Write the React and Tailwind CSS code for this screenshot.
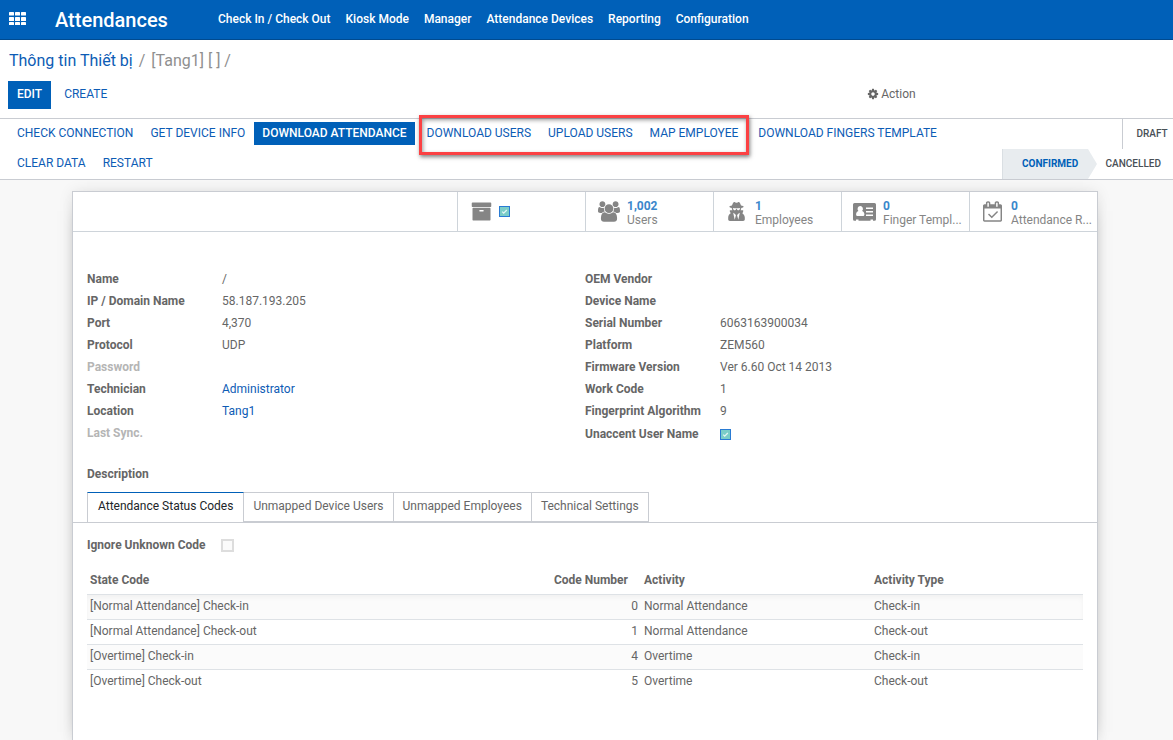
import { FaUserSecret } from "react-icons/fa";

const menuItems = [
  "Check In / Check Out",
  "Kiosk Mode",
  "Manager",
  "Attendance Devices",
  "Reporting",
  "Configuration",
];

const leftFields = [
  { label: "Name", value: "/" },
  { label: "IP / Domain Name", value: "58.187.193.205" },
  { label: "Port", value: "4,370" },
  { label: "Protocol", value: "UDP" },
  { label: "Password", empty: true },
  { label: "Technician", value: "Administrator", link: true },
  { label: "Location", value: "Tang1", link: true },
  { label: "Last Sync.", empty: true },
];

const rightFields = [
  { label: "OEM Vendor" },
  { label: "Device Name" },
  { label: "Serial Number", value: "6063163900034" },
  { label: "Platform", value: "ZEM560" },
  { label: "Firmware Version", value: "Ver 6.60 Oct 14 2013" },
  { label: "Work Code", value: "1" },
  { label: "Fingerprint Algorithm", value: "9" },
];

const tabs = [
  "Attendance Status Codes",
  "Unmapped Device Users",
  "Unmapped Employees",
  "Technical Settings",
];

const codes = [
  { name: "[Normal Attendance] Check-in", code: 0, activity: "Normal Attendance", type: "Check-in" },
  { name: "[Normal Attendance] Check-out", code: 1, activity: "Normal Attendance", type: "Check-out" },
  { name: "[Overtime] Check-in", code: 4, activity: "Overtime", type: "Check-in" },
  { name: "[Overtime] Check-out", code: 5, activity: "Overtime", type: "Check-out" },
];

const GridIcon = () => (
  <svg viewBox="0 0 17 13" className="w-[17px] h-[13px]" fill="currentColor">
    {[0, 6, 12].map((x) =>
      [0, 5, 10].map((y) => <rect key={`${x}-${y}`} x={x} y={y} width="5" height={y === 5 ? 4 : 3.6} rx="0.6" />)
    )}
  </svg>
);

const CogIcon = () => (
  <svg viewBox="0 0 1792 1792" className="size-3" fill="currentColor">
    <path d="M1152 896q0-106-75-181t-181-75-181 75-75 181 75 181 181 75 181-75 75-181zm512-109v222q0 12-8 23t-20 13l-185 28q-19 54-39 91 35 50 107 138 10 12 10 25t-9 23q-27 37-99 108t-94 71q-12 0-26-9l-138-108q-44 23-91 38-16 136-29 186-7 28-36 28h-222q-14 0-24.5-8.5t-11.5-21.5l-28-184q-49-16-90-37l-141 107q-10 9-25 9-14 0-25-11-126-114-165-168-7-10-7-23 0-12 8-23 15-21 51-66.5t54-70.5q-27-50-41-99l-183-27q-13-2-21-12.5t-8-23.5v-222q0-12 8-23t19-13l186-28q14-46 39-92-40-57-107-138-10-12-10-24 0-10 9-23 26-36 98.5-107.5t94.5-71.5q13 0 26 10l138 107q44-23 91-38 16-136 29-186 7-28 36-28h222q14 0 24.5 8.5t11.5 21.5l28 184q49 16 90 37l142-107q9-9 24-9 13 0 25 10 129 119 165 170 7 8 7 22 0 12-8 23-15 21-51 66.5t-54 70.5q26 50 41 98l183 28q13 2 21 12.5t8 23.5z" />
  </svg>
);

const ArchiveIcon = () => (
  <svg viewBox="0 0 1792 1792" className="size-[21px]" fill="currentColor">
    <path d="M1088 832q0-26-19-45t-45-19h-256q-26 0-45 19t-19 45 19 45 45 19h256q26 0 45-19t19-45zm576-192v960q0 26-19 45t-45 19h-1408q-26 0-45-19t-19-45v-960q0-26 19-45t45-19h1408q26 0 45 19t19 45zm64-448v256q0 26-19 45t-45 19h-1536q-26 0-45-19t-19-45v-256q0-26 19-45t45-19h1536q26 0 45 19t19 45z" />
  </svg>
);

const UsersIcon = () => (
  <svg viewBox="0 0 1920 1792" className="w-[22px] h-[21px]" fill="currentColor">
    <path d="M593 896q-162 5-265 128h-134q-82 0-138-40.5t-56-118.5q0-353 124-353 6 0 43.5 21t97.5 42.5 119 21.5q67 0 133-23-5 37-5 66 0 139 81 256zm1071 637q0 120-73 189.5t-194 69.5h-874q-121 0-194-69.5t-73-189.5q0-53 3.5-103.5t14-109 26.5-108.5 43-97.5 62-81 85.5-53.5 111.5-20q10 0 43 21.5t73 48 107 48 135 21.5 135-21.5 107-48 73-48 43-21.5q61 0 111.5 20t85.5 53.5 62 81 43 97.5 26.5 108.5 14 109 3.5 103.5zm-1024-1277q0 106-75 181t-181 75-181-75-75-181 75-181 181-75 181 75 75 181zm704 384q0 159-112.5 271.5t-271.5 112.5-271.5-112.5-112.5-271.5 112.5-271.5 271.5-112.5 271.5 112.5 112.5 271.5zm576 225q0 78-56 118.5t-138 40.5h-134q-103-123-265-128 81-117 81-256 0-29-5-66 66 23 133 23 59 0 119-21.5t97.5-42.5 43.5-21q124 0 124 353zm-128-609q0 106-75 181t-181 75-181-75-75-181 75-181 181-75 181 75 75 181z" />
  </svg>
);

const AddressCardIcon = () => (
  <svg viewBox="0 0 23 18" className="w-[23px] h-[18px]" fill="currentColor">
    <path
      fillRule="evenodd"
      d="M1.5 0h20A1.5 1.5 0 0 1 23 1.5v14.8a1.5 1.5 0 0 1-1.5 1.5H20v-1.2h-2.5v1.2H5.5v-1.2H3v1.2H1.500A1.5 1.5 0 0 1 0 16.300V1.5A1.5 1.5 0 0 1 1.5 0zM7.200 3a2.700 2.900 0 0 0-1.800 5C4 8.300 3.100 9.600 3.100 11.500c0 .9.5 1.5 1.300 1.500h5.700c.8 0 1.300-.6 1.300-1.500 0-1.900-.9-3.200-2.300-3.500A2.700 2.900 0 0 0 7.200 3zM13 4.500V6h7V4.500zM13 8v1.500h7V8zM13 11.500V13h7v-1.500z"
    />
  </svg>
);

const CalendarIcon = () => (
  <svg viewBox="0 0 1664 1792" className="w-[19px] h-[21px]" fill="currentColor">
    <path d="M1303 964l-512 512q-10 9-23 9t-23-9l-288-288q-9-10-9-23t9-22l46-46q9-9 22-9t23 9l220 220 444-444q10-9 23-9t22 9l46 46q9 9 9 22t-9 23zm-1175 700h1408v-1024h-1408v1024zm384-1216v-288q0-14-9-23t-23-9h-64q-14 0-23 9t-9 23v288q0 14 9 23t23 9h64q14 0 23-9t9-23zm768 0v-288q0-14-9-23t-23-9h-64q-14 0-23 9t-9 23v288q0 14 9 23t23 9h64q14 0 23-9t9-23zm384-64v1280q0 52-38 90t-90 38h-1408q-52 0-90-38t-38-90v-1280q0-52 38-90t90-38h128v-96q0-66 47-113t113-47h64q66 0 113 47t47 113v96h384v-96q0-66 47-113t113-47h64q66 0 113 47t47 113v96h128q52 0 90 38t38 90z" />
  </svg>
);

const Checked = ({ id, label }) => (
  <span className="relative block size-[11px]">
    <input
      id={id}
      type="checkbox"
      aria-label={label}
      defaultChecked
      className="block appearance-none size-[11px] border border-[#2a7bd3] bg-[#7bcdc8]"
    />
    <svg viewBox="0 0 11 11" className="absolute inset-0 pointer-events-none" fill="none" stroke="#e4f6f4" strokeWidth="1.3">
      <path d="M3.2 5.6l1.5 1.5L7.8 4" />
    </svg>
  </span>
);

const StatButton = ({ icon, value, label }) => (
  <button className="flex w-32 h-[39px] border-l border-[#ced4da] text-left">
    <span className="flex w-[41px] h-full shrink-0 items-center justify-center pl-1">{icon}</span>
    <span className="pt-[7px] text-[12px] leading-[14px] whitespace-nowrap">
      <span className="block font-bold text-[#3a87cb]">{value}</span>
      <span className="block">{label}</span>
    </span>
  </button>
);

const ActionButton = ({ children, primary }) => (
  <button
    className={
      primary
        ? "h-[23px] px-2 pb-[2px] bg-[#0060b8] text-white font-medium uppercase"
        : "h-[23px] px-2 pb-[2px] text-[#0d5cb5] uppercase"
    }
  >
    {children}
  </button>
);

const Field = ({ label, value, link, empty }) => (
  <div className="flex h-[22px] items-center">
    <dt className={empty ? "w-[135px] shrink-0 font-bold text-[#b5b5b5]" : "w-[135px] shrink-0 font-bold"}>{label}</dt>
    <dd>{link ? <a href="#" className="text-[#0d5cb5]">{value}</a> : value}</dd>
  </div>
);

const App = () => {
  return (
    <div className="flex flex-col min-h-screen bg-[#f8f8f8] text-[12px] leading-[18px] text-[#666666] font-[Roboto,sans-serif]">
      {/* Main menu */}
      <header className="flex h-10 items-center border-b border-[#004a8f] bg-[#0060b8] pl-[9px] text-white">
        <button aria-label="Applications" className="mr-[29px] pb-[2px]">
          <GridIcon />
        </button>
        <a href="#" className="w-[163px] text-[20px] leading-6 font-medium">Attendances</a>
        <nav className="flex gap-[15px] pb-[2px] font-medium">
          {menuItems.map((item) => (
            <a key={item} href="#">{item}</a>
          ))}
        </nav>
      </header>

      {/* Control panel */}
      <div className="border-b border-[#c9ccd2] bg-white px-2 py-[9px]">
        <ol className="flex gap-[6px] pl-px text-[16px] leading-6 text-[#8f8f8f]">
          <li><a href="#" className="text-[#0d5cb5]">Thông tin Thiết bị</a></li>
          <li>/</li>
          <li>[Tang1] [ ] /</li>
        </ol>
        <div className="grid grid-cols-[74%_1fr] pt-2">
          <div className="flex gap-1">
            <button className="h-7 px-[9px] pb-[2px] bg-[#0060b8] text-white font-medium">EDIT</button>
            <button className="h-7 px-[9px] pb-[2px] text-[#0d5cb5]">CREATE</button>
          </div>
          <button className="flex h-7 items-center gap-[2px] pb-[2px] pl-[3px]">
            <CogIcon />
            Action
          </button>
        </div>
      </div>

      {/* Status bar */}
      <div className="flex justify-between border-b border-[#c9ccd2] bg-white pl-[9px]">
        <div className="flex flex-wrap flex-1 gap-x-px gap-y-[7px] pt-[3px] pb-1">
          <ActionButton>Check Connection</ActionButton>
          <ActionButton>Get Device Info</ActionButton>
          <ActionButton primary>Download Attendance</ActionButton>
          <div className="relative flex gap-px px-[3px]">
            <ActionButton>Download Users</ActionButton>
            <ActionButton>Upload Users</ActionButton>
            <ActionButton>Map Employee</ActionButton>
            <span className="absolute -top-[7px] -bottom-[10px] left-[3px] right-0 border-3 border-[#fb4143] shadow-[1px_2px_4px_rgba(0,0,0,0.5),inset_1px_2px_4px_rgba(0,0,0,0.4)] pointer-events-none" />
          </div>
          <ActionButton>Download Fingers Template</ActionButton>
          <ActionButton>Clear Data</ActionButton>
          <ActionButton>Restart</ActionButton>
        </div>
        <div className="flex w-[171px] flex-wrap justify-end text-[10px] font-medium text-[#495057]">
          <button className="h-[30px] w-[51px] border-l border-[#c9ccd2] pl-2 pb-px">DRAFT</button>
          <div className="flex">
            <button className="relative h-[30px] w-[86px] border-l border-[#dadfe3] bg-[#e8ecef] pl-[10px] font-bold text-[#0060b8]">
              CONFIRMED
              <svg viewBox="0 0 10 30" className="absolute top-0 left-full h-[30px] w-[10px]">
                <path d="M0 0L9 15L0 30z" fill="#e8ecef" />
              </svg>
            </button>
            <button className="h-[30px] pl-[18px] pr-3">CANCELLED</button>
          </div>
        </div>
      </div>

      {/* Form sheet */}
      <main className="flex flex-col flex-1 pl-[72px] pr-[75px] pt-[11px]">
        <div className="flex-1 border border-b-0 border-[#c9ccd2] bg-white shadow-[0_5px_20px_-15px_#000,0_0_14px_rgba(0,0,0,0.08)]">
          <div className="flex h-10 justify-end border-b border-[#ced4da] text-[#858585]">
            <div className="flex w-32 items-center border-l border-[#ced4da] pl-[13px] gap-[7px]">
              <ArchiveIcon />
              <Checked id="active" label="Active" />
            </div>
            <StatButton icon={<UsersIcon />} value="1,002" label="Users" />
            <StatButton icon={<FaUserSecret size={19} />} value="1" label="Employees" />
            <StatButton icon={<AddressCardIcon />} value="0" label="Finger Templ..." />
            <StatButton icon={<CalendarIcon />} value="0" label="Attendance R..." />
          </div>

          <div className="px-[14px] pt-9">
            <div className="grid grid-cols-2">
              <dl>
                {leftFields.map((field) => (
                  <Field key={field.label} {...field} />
                ))}
              </dl>
              <div>
                <dl>
                  {rightFields.map((field) => (
                    <Field key={field.label} {...field} />
                  ))}
                </dl>
                <div className="flex h-6 items-center">
                  <label htmlFor="unaccent" className="w-[135px] font-bold">Unaccent User Name</label>
                  <Checked id="unaccent" />
                </div>
              </div>
            </div>
            <div className="pt-[19px] font-bold">Description</div>
          </div>

          <div role="tablist" className="flex mt-[9px] border-b border-[#c9ccd2] pl-[14px]">
            {tabs.map((tab, i) => (
              <button
                key={tab}
                role="tab"
                aria-selected={i === 0}
                className={
                  i === 0
                    ? "h-[30px] border-x border-t border-[#c9ccd2] border-t-[#0060b8] px-[10px] pb-[3px] text-[#212529]"
                    : "h-[30px] border-r border-y border-[#c9ccd2] px-[9px] pb-[2px]"
                }
              >
                {tab}
              </button>
            ))}
          </div>

          <div className="px-[14px] pt-[13px] pb-12">
            <div className="flex items-center gap-[15px]">
              <label htmlFor="ignore" className="font-bold">Ignore Unknown Code</label>
              <input
                id="ignore"
                type="checkbox"
                className="appearance-none size-[13px] border-2 border-[#dddddd] bg-[#fbfbfb]"
              />
            </div>
            <table className="mt-3 w-full table-fixed text-left">
              <thead>
                <tr className="h-7 border-b border-[#dee2e6]">
                  <th className="px-[3px]">State Code</th>
                  <th className="w-[190px] pr-[13px] text-right">Code Number</th>
                  <th className="w-[230px] px-[3px]">Activity</th>
                  <th className="w-[212px] px-[3px]">Activity Type</th>
                </tr>
              </thead>
              <tbody>
                {codes.map((row) => (
                  <tr
                    key={row.name}
                    className="h-[25px] border-b border-[#dee2e6] last:border-b-0 odd:bg-[#fbfbfb] first:shadow-[inset_0_4px_5px_rgba(0,0,0,0.04)]"
                  >
                    <td className="px-[3px] pb-[2px]">{row.name}</td>
                    <td className="px-[3px] pb-[2px] text-right">{row.code}</td>
                    <td className="px-[3px] pb-[2px]">{row.activity}</td>
                    <td className="px-[3px] pb-[2px]">{row.type}</td>
                  </tr>
                ))}
              </tbody>
            </table>
          </div>
        </div>
      </main>
    </div>
  );
};

export default App;
